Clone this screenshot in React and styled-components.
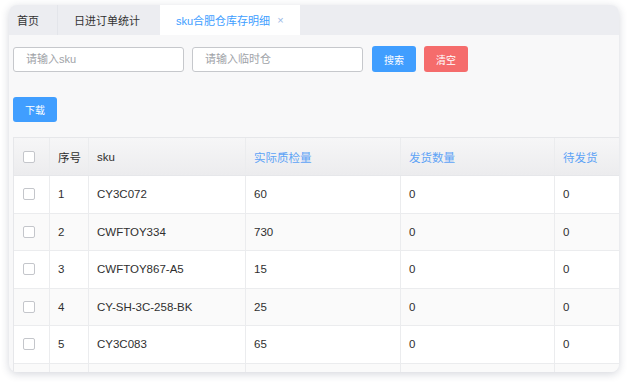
import React from "react";
import styled, { createGlobalStyle } from "styled-components";

const Global = createGlobalStyle`
  html, body { margin: 0; padding: 0; background: #ffffff; }
  body { font-family: "Liberation Sans", Arial, "Noto Sans CJK SC", sans-serif; }
  * { box-sizing: border-box; }
`;

const Page = styled.div`
  width: 628px;
  height: 386px;
  padding: 5px 9px 0 9px;
`;

const Card = styled.div`
  width: 610px;
  height: 367px;
  border-radius: 8px;
  overflow: hidden;
  background: #f8f8f9;
  box-shadow: 0 2px 8px rgba(40, 50, 80, 0.2);
  display: flex;
  flex-direction: column;
`;

const TabBar = styled.div`
  height: 30px;
  flex: none;
  display: flex;
  background: #ecedf1;
`;

const Tab = styled.div`
  width: ${(p) => p.$w}px;
  padding-left: ${(p) => p.$pl}px;
  display: flex;
  align-items: center;
  gap: 7px;
  font-size: 11px;
  color: ${(p) => (p.$active ? "#409eff" : "#333")};
  background: ${(p) => (p.$active ? "#ffffff" : "transparent")};
  border-right: ${(p) => (p.$sep ? "1px solid #e3e5ea" : "none")};
  white-space: nowrap;
`;

const Close = styled.span`
  font-size: 11px;
  color: #9cb9e6;
`;

const Content = styled.div`
  flex: 1;
  padding: 11px 0 0 4px;
  display: flex;
  flex-direction: column;
  overflow: hidden;
`;

const FilterRow = styled.div`
  display: flex;
  align-items: center;
  gap: 8px;
  height: 26px;
`;

const Input = styled.input`
  width: 171px;
  height: 25px;
  border: 1px solid #c6c8cc;
  border-radius: 3px;
  background: #fff;
  padding: 0 0 0 12px;
  font-size: 11px;
  font-family: inherit;
  outline: none;
  &::placeholder { color: #a0a3a8; }
`;

const Button = styled.button`
  width: 44px;
  height: ${(p) => p.$h || 26}px;
  border: none;
  border-radius: 3px;
  background: ${(p) => (p.$danger ? "#f56c6c" : "#409eff")};
  color: #fff;
  font-size: 10px;
  font-family: inherit;
  padding: 0;
  margin-left: ${(p) => p.$ml || 0}px;
`;

const ActionRow = styled.div`
  margin-top: 25px;
  height: 25px;
  display: flex;
`;

const Table = styled.div`
  margin-top: 15px;
  border-top: 1px solid #e6e7ea;
  border-left: 1px solid #e6e7ea;
  width: 700px;
`;

const cols = "36px 39px 157px 155px 154px 160px";

const HeadRow = styled.div`
  display: grid;
  grid-template-columns: ${cols};
  height: 38px;
  background: linear-gradient(#f6f6f7, #ececee);
  border-bottom: 1px solid #e6e7ea;
`;

const Row = styled.div`
  display: grid;
  grid-template-columns: ${cols};
  height: 37.5px;
  background: ${(p) => (p.$alt ? "#fafafa" : "#ffffff")};
  border-bottom: 1px solid #ebecee;
`;

const Cell = styled.div`
  display: flex;
  align-items: center;
  padding-left: ${(p) => (p.$check ? 9 : 8)}px;
  border-right: 1px solid #ebecee;
  font-size: 11.5px;
  color: ${(p) => (p.$link ? "#5ea3f6" : "#2f2f2f")};
  white-space: nowrap;
  overflow: hidden;
`;

const Check = styled.span`
  width: 12px;
  height: 12px;
  border: 1px solid #c4c6cb;
  border-radius: 2px;
  background: #fff;
`;

const rows = [
  ["1", "CY3C072", "60", "0", "0"],
  ["2", "CWFTOY334", "730", "0", "0"],
  ["3", "CWFTOY867-A5", "15", "0", "0"],
  ["4", "CY-SH-3C-258-BK", "25", "0", "0"],
  ["5", "CY3C083", "65", "0", "0"],
  ["", "", "", "", ""],
];

export default function App() {
  return (
    <>
      <Global />
      <Page>
        <Card>
          <TabBar>
            <Tab $w={49} $pl={8} $sep>首页</Tab>
            <Tab $w={102} $pl={16}>日进订单统计</Tab>
            <Tab $w={140} $pl={16} $active>
              sku合肥仓库存明细<Close>×</Close>
            </Tab>
          </TabBar>
          <Content>
            <FilterRow>
              <Input placeholder="请输入sku" />
              <Input placeholder="请输入临时仓" />
              <Button $ml={1}>搜索</Button>
              <Button $danger>清空</Button>
            </FilterRow>
            <ActionRow>
              <Button $h={25}>下载</Button>
            </ActionRow>
            <Table>
              <HeadRow>
                <Cell $check><Check /></Cell>
                <Cell>序号</Cell>
                <Cell>sku</Cell>
                <Cell $link>实际质检量</Cell>
                <Cell $link>发货数量</Cell>
                <Cell $link>待发货</Cell>
              </HeadRow>
              {rows.map((r, i) => (
                <Row key={i} $alt={i % 2 === 1}>
                  <Cell $check>{r[0] && <Check />}</Cell>
                  {r.map((v, j) => (
                    <Cell key={j}>{v}</Cell>
                  ))}
                </Row>
              ))}
            </Table>
          </Content>
        </Card>
      </Page>
    </>
  );
}
